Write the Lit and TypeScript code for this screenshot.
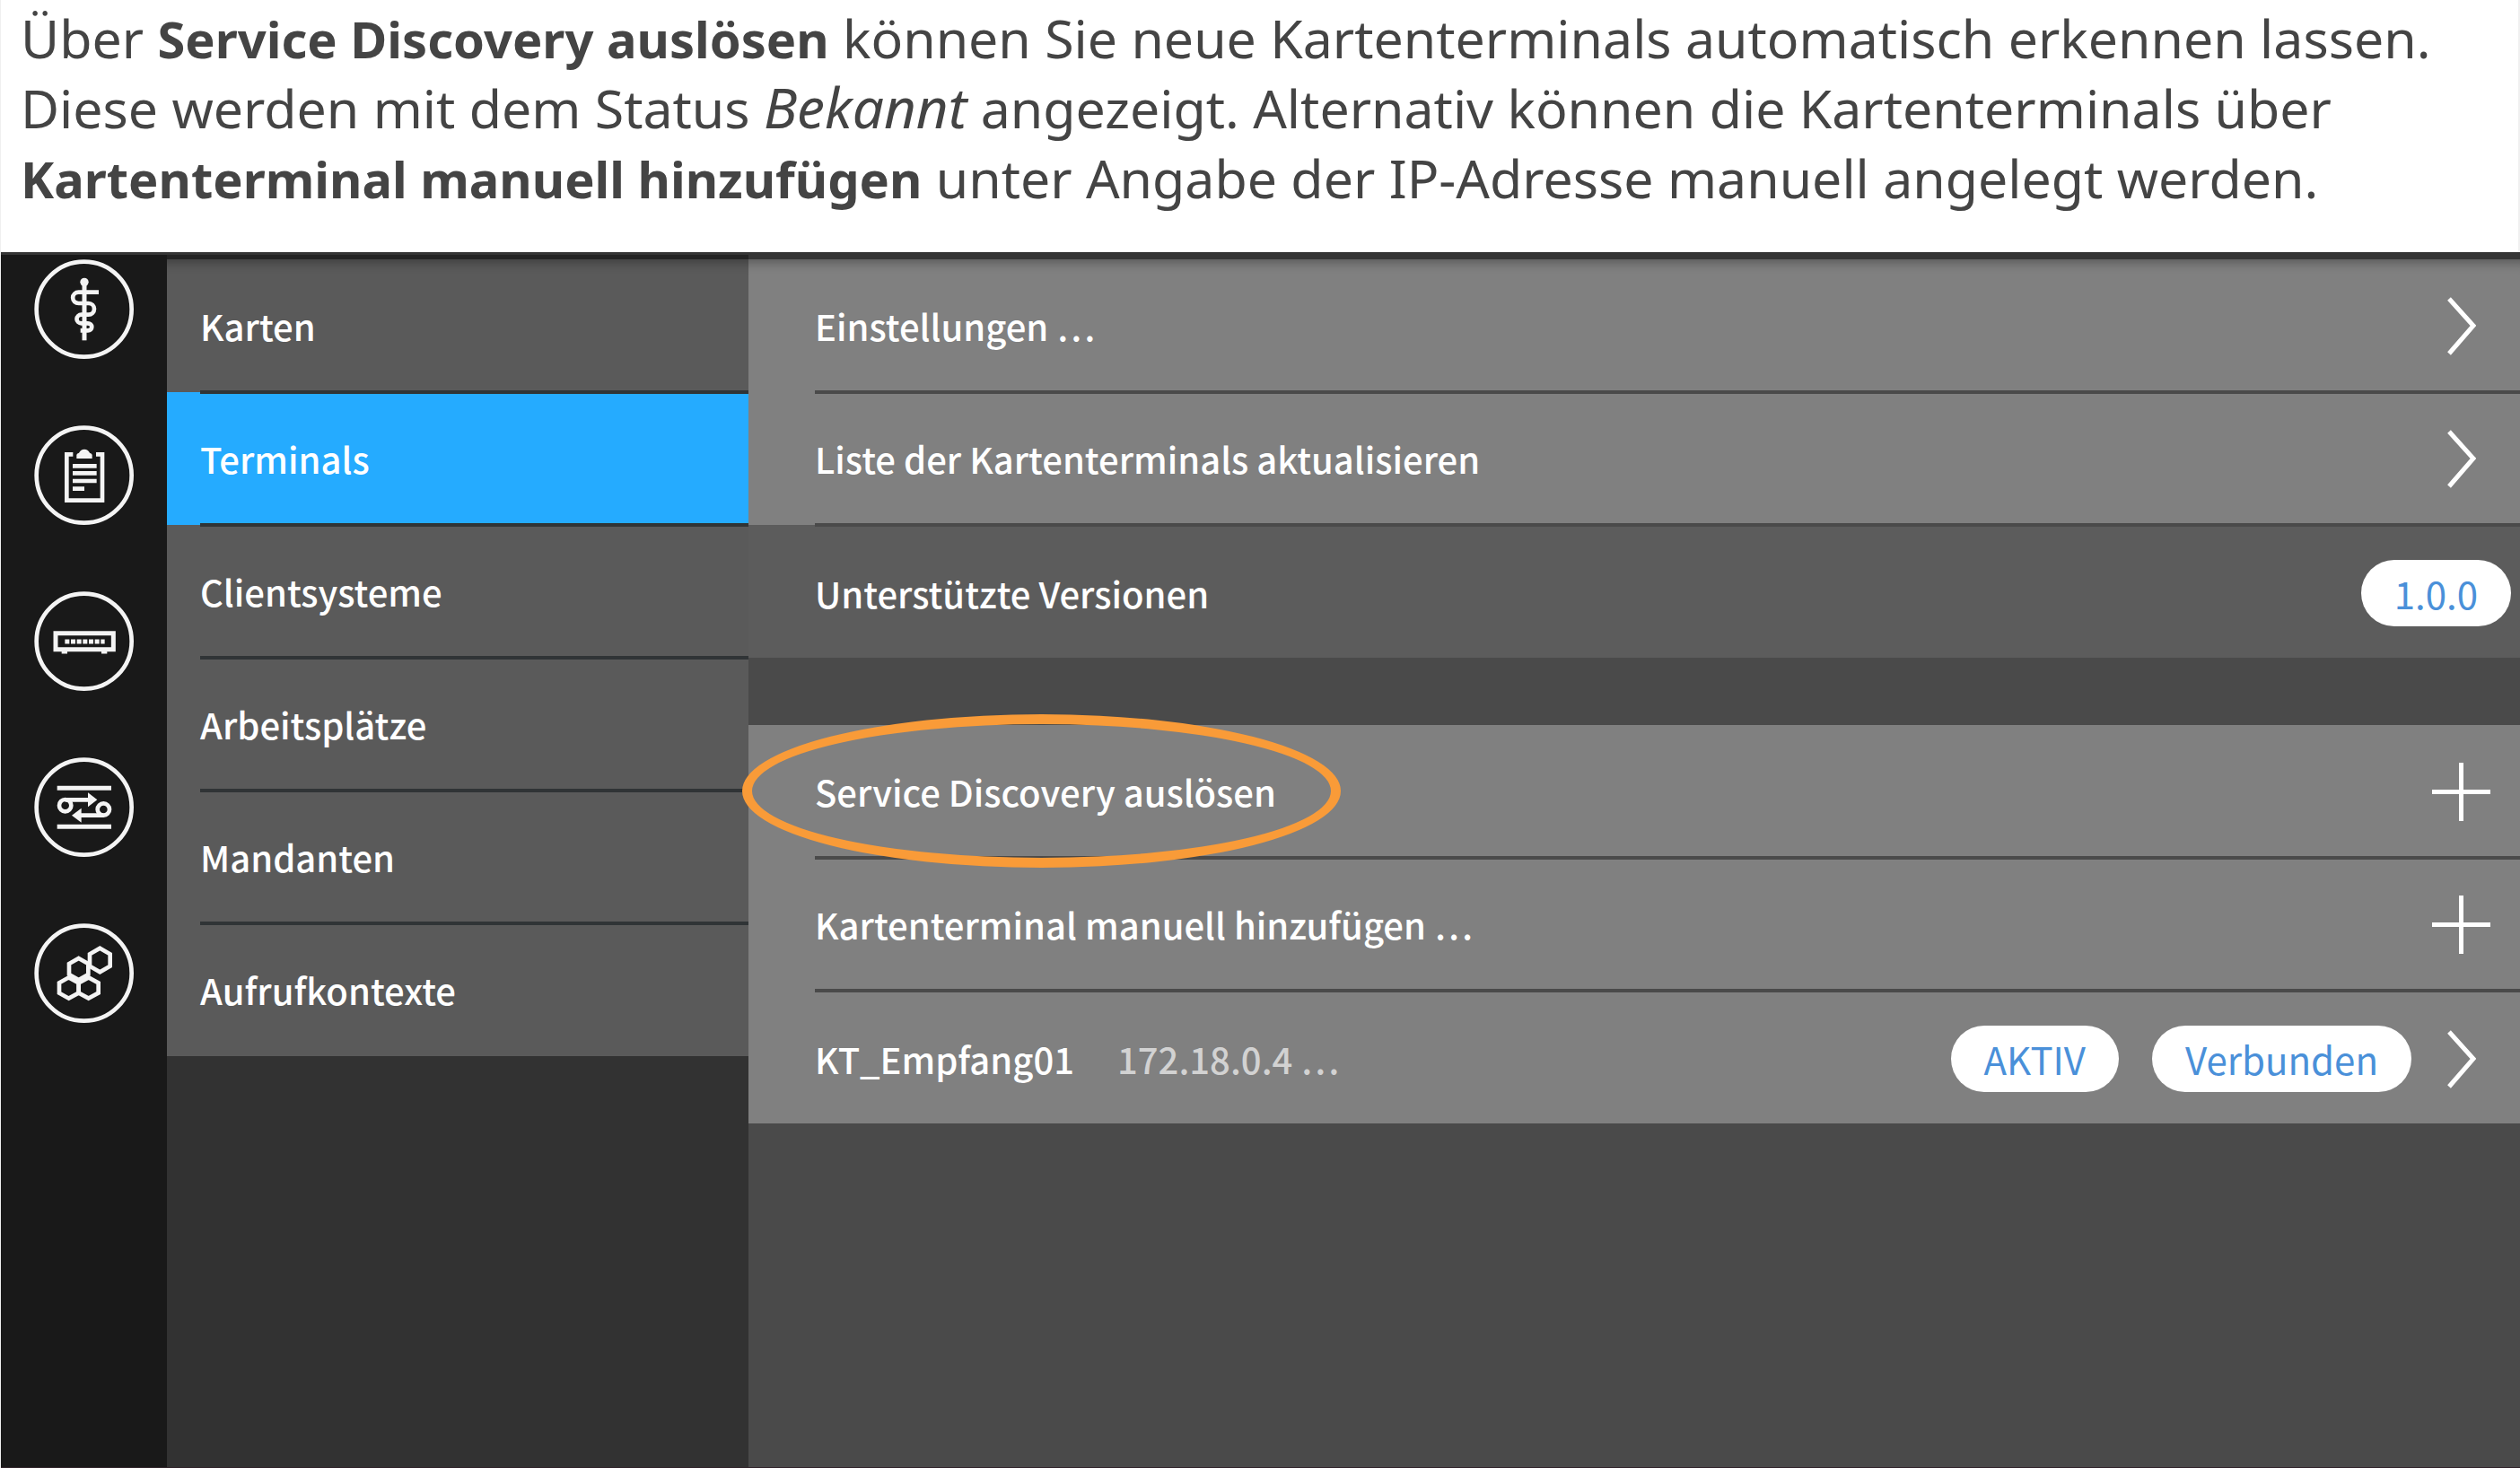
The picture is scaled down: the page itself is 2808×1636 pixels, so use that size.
import { LitElement, html, svg, css, nothing, type TemplateResult } from "lit";
import { customElement, property, state } from "lit/decorators.js";
import { classMap } from "lit/directives/class-map.js";

/* Round section buttons; all glyphs share a 333-unit square. */
const sectionIcons: { label: string; art: TemplateResult }[] = [
  {
    label: "Praxis",
    art: svg`
      <circle cx="168" cy="76" r="14" fill="currentColor" stroke="none" />
      <path d="M168 76V271" stroke-width="15" />
      <path d="M216 110H149a19 18 0 0 0 0 37H182a19 19 0 0 1 0 38H158a15 14 0 0 0 0 29H180a13 12 0 0 1 0 24H155" stroke-width="14" />`,
  },
  {
    label: "Protokolle",
    art: svg`
      <path d="M130 97H109V251H228V97H207" stroke-width="14" />
      <path d="M142 111V99Q142 94 150 92Q156 80 168 80Q180 80 186 92Q194 94 194 99V111Z" fill="currentColor" stroke="none" />
      <path d="M129 136H209M129 160H209M129 186H209M129 212H168" stroke-width="14" />`,
  },
  {
    label: "Konnektor",
    art: svg`
      <path d="M72 140H265V194H72Z" stroke-width="15" />
      <path d="M103 168H236" stroke-width="15" stroke-dasharray="15 5" />
      <path d="M92 204H111M225 204H244" stroke-width="9" />`,
  },
  {
    label: "Netzwerk",
    art: svg`
      <path d="M77 103H258M77 232H258" stroke-width="15" />
      <circle cx="104" cy="161" r="20" stroke-width="14" />
      <circle cx="232" cy="174" r="20" stroke-width="14" />
      <path d="M104 142H184M232 194H155" stroke-width="14" />
      <path d="M180 118L211 142L180 166ZM158 170L126 194L158 218Z" fill="currentColor" stroke="none" />`,
  },
  {
    label: "Module",
    art: svg`
      <path d="M220 83L254 103V143L220 163L186 143V103Z" stroke-width="14" />
      <path d="M149 117L181 135V171L149 189L117 171V135Z" stroke-width="14" />
      <path d="M116 181L149 199V233L116 251L84 233V199Z" stroke-width="14" />
      <path d="M182 181L215 199V233L182 251L149 233V199Z" stroke-width="14" />`,
  },
];

type Action = "open" | "add" | "none";

@customElement("list-row")
class ListRow extends LitElement {
  @property() label = "";
  @property() detail = "";
  @property() action: Action = "none";
  @property({ attribute: false }) badges: string[] = [];
  @property({ type: Boolean }) marked = false;

  static styles = css`
    :host {
      display: block;
      position: relative;
    }
    .row {
      box-sizing: border-box;
      display: flex;
      align-items: center;
      gap: 37px;
      width: 100%;
      min-height: 148px;
      margin: 0;
      padding: 0 33px 0 74px;
      border: 0;
      background: none;
      color: #fff;
      font: inherit;
      text-align: left;
    }
    button.row {
      cursor: pointer;
    }
    .row.badged {
      padding-top: 4px;
    }
    .row.info {
      padding-right: 10px;
    }
    .text {
      flex: 1;
    }
    .detail {
      margin-left: 48px;
      color: #d2d2d2;
    }
    .badge {
      padding: 0 37px;
      border-radius: 37px;
      background: #fff;
      color: #4a90d9;
      font-size: 42px;
      line-height: 74px;
      font-weight: 400;
    }
    .glyph {
      display: block;
      width: 65px;
      height: 65px;
      fill: none;
      stroke: #fff;
      stroke-width: 5;
    }
    .narrow {
      width: 32px;
      margin-right: 16px;
    }
    .badge + .narrow {
      margin-left: 3px;
    }
    .mark {
      position: absolute;
      left: -7px;
      top: -12px;
      box-sizing: border-box;
      width: 667px;
      height: 171px;
      border: 11px solid #f99b38;
      border-radius: 50%;
      pointer-events: none;
    }
  `;

  private glyph() {
    if (this.action === "open") {
      return html`<svg class="glyph narrow" viewBox="0 0 32 65" aria-hidden="true">
        <path d="M2 2L29 32L2 63" />
      </svg>`;
    }
    if (this.action === "add") {
      return html`<svg class="glyph" viewBox="0 0 65 65" aria-hidden="true">
        <path d="M0 32.5H65M32.5 0V65" />
      </svg>`;
    }
    return nothing;
  }

  render() {
    const content = html`
      <span class="text"
        >${this.label}${this.detail
          ? html`<span class="detail">${this.detail}</span>`
          : nothing}</span
      >
      ${this.badges.map((b) => html`<span class="badge">${b}</span>`)}
      ${this.glyph()}
    `;
    const classes = classMap({
      row: true,
      info: this.action === "none",
      badged: this.badges.length > 0,
    });
    return html`
      ${this.action === "none"
        ? html`<div class=${classes}>${content}</div>`
        : html`<button class=${classes} type="button">${content}</button>`}
      ${this.marked ? html`<span class="mark"></span>` : nothing}
    `;
  }
}

@customElement("app-root")
class AppRoot extends LitElement {
  @state() private selected = "Terminals";

  private readonly menu = [
    "Karten",
    "Terminals",
    "Clientsysteme",
    "Arbeitsplätze",
    "Mandanten",
    "Aufrufkontexte",
  ];

  static styles = css`
    :host {
      display: flex;
      flex-direction: column;
      box-sizing: border-box;
      min-height: 100vh;
      border-left: 1px solid #f0f0f0;
      background: #fff;
    }
    .intro {
      margin: 0;
      padding: 3px 24px 44px 22px;
      border-right: 2px solid #f0f0f0;
      color: #444;
      font: 400 59px/78px "Noto Sans", "Open Sans", sans-serif;
    }
    .intro b,
    .intro i {
      line-height: 1;
    }
    .intro b {
      font-size: 56px;
    }
    .intro i {
      font-size: 62px;
    }
    .console {
      flex: 1;
      display: grid;
      grid-template-columns: 185px 648px 1fr;
      border-top: 3px solid #353535;
      border-bottom: 1px solid #30232a;
      font: 500 40px/60px "Noto Sans CJK SC", "Open Sans", sans-serif;
    }
    .sections {
      display: flex;
      flex-direction: column;
      align-items: center;
      gap: 74px;
      padding-top: 5px;
      background: #191919;
    }
    .section {
      width: 111px;
      height: 111px;
      padding: 0;
      border: 0;
      background: none;
      color: #f4f4f4;
      cursor: pointer;
    }
    .section svg {
      display: block;
      width: 100%;
      height: 100%;
      fill: none;
      stroke: currentColor;
    }
    .menu {
      background: #323232;
    }
    .menu,
    .content {
      border-top: 5px solid #232323;
    }
    .content {
      border-top-color: #353535;
      background: #4a4a4a;
    }
    .list {
      margin: 0;
      padding: 0;
      list-style: none;
    }
    .list + .list {
      margin-top: 75px;
    }
    .item {
      --line: linear-gradient(#4a4a4a, #4a4a4a);
      background: var(--line) 74px 0 / 100% 2px no-repeat,
        var(--line) 74px 100% / 100% 2px no-repeat, #808080;
    }
    .menu .item {
      --line: linear-gradient(#303436, #303436);
      background: var(--line) 37px 0 / 100% 2px no-repeat,
        var(--line) 37px 100% / 100% 2px no-repeat, #5a5a5a;
    }
    .item:first-child,
    .menu .item:first-child {
      background-size: 0 0, 100% 2px;
    }
    .item:last-child,
    .menu .item:last-child {
      background-size: 100% 2px, 0 0;
    }
    .menu .active {
      background-color: #25abff;
    }
    .quiet {
      background-color: #5c5c5c;
    }
    .top .item:first-child,
    .menu .item:first-child {
      box-shadow: inset 0 16px 12px -12px rgba(0, 0, 0, 0.3);
    }
    .entry {
      display: block;
      width: 100%;
      min-height: 148px;
      padding: 0 37px;
      border: 0;
      background: none;
      color: #fff;
      font: inherit;
      text-align: left;
      cursor: pointer;
    }
  `;

  render() {
    return html`
      <p class="intro">
        Über <b>Service Discovery auslösen</b> können Sie neue Kartenterminals
        automatisch erkennen lassen. Diese werden mit dem Status
        <i>Bekannt</i> angezeigt. Alternativ können die Kartenterminals über
        <b>Kartenterminal manuell hinzufügen</b> unter Angabe der IP-Adresse
        manuell angelegt werden.
      </p>
      <main class="console">
        <nav class="sections">
          ${sectionIcons.map(
            (s) => html`<button class="section" type="button" aria-label=${s.label}>
              <svg viewBox="0 0 333 333" aria-hidden="true">
                <circle cx="167" cy="167" r="159" stroke-width="14" />
                ${s.art}
              </svg>
            </button>`
          )}
        </nav>
        <nav class="menu">
          <ul class="list">
            ${this.menu.map(
              (name) => html`<li
                class=${classMap({ item: true, active: name === this.selected })}
              >
                <button
                  class="entry"
                  type="button"
                  @click=${() => (this.selected = name)}
                >
                  ${name}
                </button>
              </li>`
            )}
          </ul>
        </nav>
        <section class="content">
          <ul class="list top">
            <li class="item">
              <list-row label="Einstellungen …" action="open"></list-row>
            </li>
            <li class="item">
              <list-row
                label="Liste der Kartenterminals aktualisieren"
                action="open"
              ></list-row>
            </li>
            <li class="item quiet">
              <list-row label="Unterstützte Versionen" .badges=${["1.0.0"]}></list-row>
            </li>
          </ul>
          <ul class="list">
            <li class="item">
              <list-row label="Service Discovery auslösen" action="add" marked></list-row>
            </li>
            <li class="item">
              <list-row label="Kartenterminal manuell hinzufügen …" action="add"></list-row>
            </li>
            <li class="item">
              <list-row
                label="KT_Empfang01"
                detail="172.18.0.4 …"
                action="open"
                .badges=${["AKTIV", "Verbunden"]}
              ></list-row>
            </li>
          </ul>
        </section>
      </main>
    `;
  }
}
